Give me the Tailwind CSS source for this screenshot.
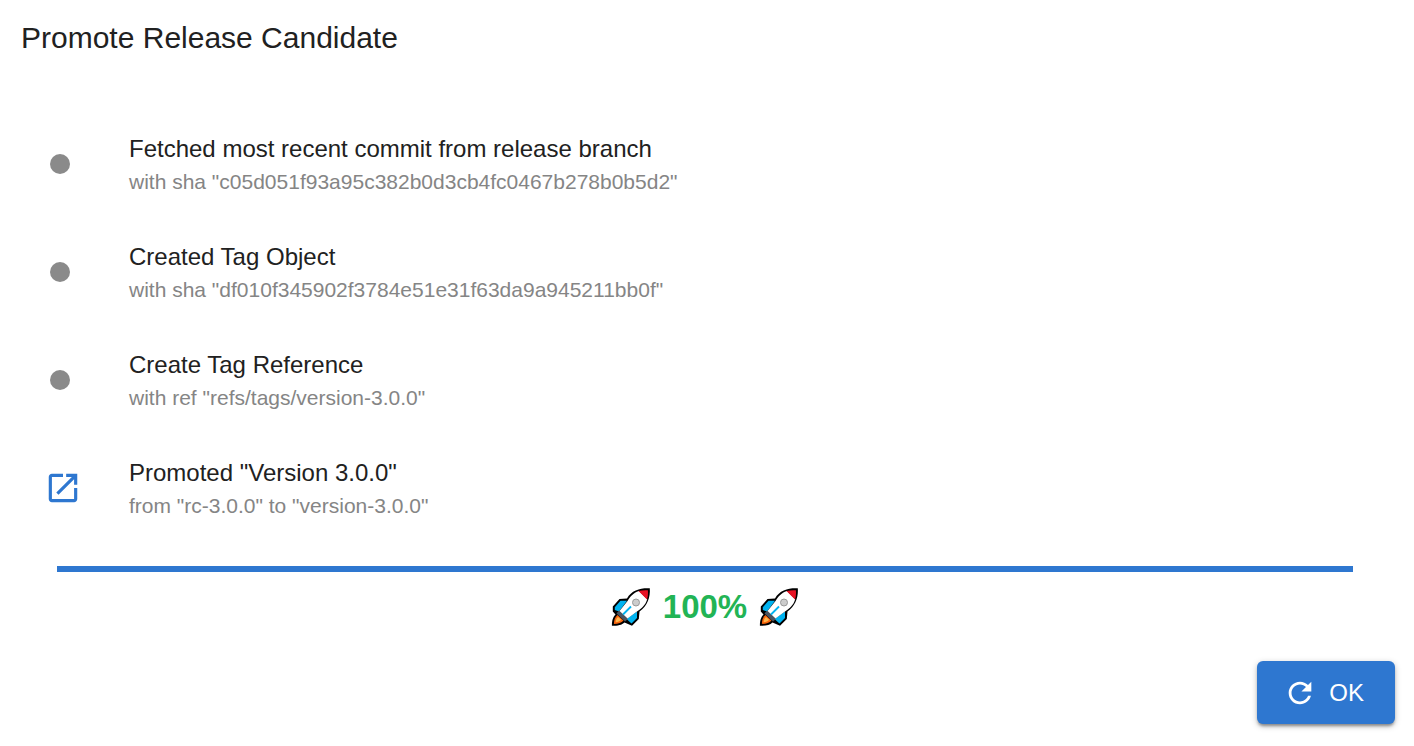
<!DOCTYPE html>
<html lang="en">
<head>
<meta charset="utf-8">
<meta name="viewport" content="width=device-width, initial-scale=1">
<title>Promote Release Candidate</title>
<script src="https://cdn.jsdelivr.net/npm/@tailwindcss/browser@4"></script>
</head>
<body class="bg-white font-['Liberation_Sans',Arial,sans-serif] text-[#212121]">
<svg class="hidden" aria-hidden="true">
  <symbol id="rocket" viewBox="0 0 40 40">
    <path d="M38.800 1.300C30 .8 20.500 3 16 11.500L8.500 12L1.800 19.500V24.500L4.500 27.500C2 30 1 33 .9 38.800C7 38.800 11 38 13.500 35.500L21 38.800L27.800 32L28.500 24.500C36.500 19 39.500 10 38.800 1.300Z" fill="#000"/>
    <path d="M16 13.800H9.500L3.800 20.200V23L8 24.500Z M26 24.500V31L20.500 36.500L15.500 32Z" fill="#00b3f0"/>
    <path d="M6.500 28C4 30 2.900 33 2.900 36.900C7.500 36.800 10.500 36 12.500 33.500Z" fill="#f7630c"/>
    <path d="M7 30C5.300 31.500 4.600 33.500 4.700 35.200C7 35 9 34.300 10.200 32.700Z" fill="#ffb84d"/>
    <path d="M5.500 26.500L8 23.500L17 32L14 34.500Z" fill="#4a5460"/>
    <path d="M8.500 24L16.500 14C19 9.500 22 6 28 3.900L36.200 12.200C34.500 18 31 21 26 24.500L16.500 31.500Z" fill="#fff"/>
    <path d="M27.500 4C30.500 3.200 33.500 3 36.900 3.200C37.100 7 37 9.500 36 12.500Z" fill="#e81224"/>
    <circle cx="25" cy="15.500" r="3.500" fill="#ccc" stroke="#999" stroke-width="1"/>
    <path d="M12 27.500L20 19.500" fill="none" stroke="#00b3f0" stroke-width="1.800"/>
  </symbol>
</svg>
<main class="pb-5">
  <h1 class="px-[21px] pt-4 text-3xl leading-11">Promote Release Candidate</h1>
  <ul class="mt-[50px] pl-12">
    <li class="flex h-27 items-center">
      <span class="w-[81px] shrink-0"><span class="ml-0.5 block size-5 rounded-full bg-[#8a8a8a]"></span></span>
      <div><p class="text-2xl leading-9">Fetched most recent commit from release branch</p><p class="text-[21px] leading-[30px] text-[#858585]">with sha "c05d051f93a95c382b0d3cb4fc0467b278b0b5d2"</p></div>
    </li>
    <li class="flex h-27 items-center">
      <span class="w-[81px] shrink-0"><span class="ml-0.5 block size-5 rounded-full bg-[#8a8a8a]"></span></span>
      <div><p class="text-2xl leading-9">Created Tag Object</p><p class="text-[21px] leading-[30px] text-[#858585]">with sha "df010f345902f3784e51e31f63da9a945211bb0f"</p></div>
    </li>
    <li class="flex h-27 items-center">
      <span class="w-[81px] shrink-0"><span class="ml-0.5 block size-5 rounded-full bg-[#8a8a8a]"></span></span>
      <div><p class="text-2xl leading-9">Create Tag Reference</p><p class="text-[21px] leading-[30px] text-[#858585]">with ref "refs/tags/version-3.0.0"</p></div>
    </li>
    <li class="flex h-27 items-center">
      <span class="w-[81px] shrink-0">
        <a href="#" aria-label="Open release" class="-ml-1 block size-[38px] text-[#2e77d0]">
          <svg viewBox="0 0 24 24" class="size-full fill-current"><path d="M19 19H5V5h7V3H5c-1.110 0-2 .9-2 2v14c0 1.100.89 2 2 2h14c1.100 0 2-.9 2-2v-7h-2v7zM14 3v2h3.590l-9.830 9.830 1.410 1.410L19 6.410V10h2V3h-7z"/></svg>
        </a>
      </span>
      <div><p class="text-2xl leading-9">Promoted "Version 3.0.0"</p><p class="text-[21px] leading-[30px] text-[#858585]">from "rc-3.0.0" to "version-3.0.0"</p></div>
    </li>
  </ul>
  <div role="progressbar" aria-label="Promotion progress" aria-valuenow="100" aria-valuemin="0" aria-valuemax="100" class="mt-6 mr-[61px] ml-[57px] h-1.5 bg-[#2e77d0]"></div>
  <div class="mt-[15px] mr-1 flex h-10 items-center justify-center gap-3">
    <svg class="size-10" role="img" aria-label="Rocket"><use href="#rocket"/></svg>
    <strong class="text-[33px] leading-10 text-[#22b455]">100%</strong>
    <svg class="size-10" role="img" aria-label="Rocket"><use href="#rocket"/></svg>
  </div>
  <div class="mt-[34px] flex justify-end pr-[19px]">
    <button type="button" class="flex h-[63px] items-center gap-3 rounded-md bg-[#2e77d0] pr-[31px] pl-[26px] text-2xl leading-8 text-white shadow-[0_3px_3px_-1px_rgba(0,0,0,0.35),0_2px_6px_rgba(0,0,0,0.25)]">
      <svg viewBox="0 0 24 24" class="size-[34px] fill-current" aria-hidden="true"><path d="M17.650 6.350C16.200 4.900 14.210 4 12 4c-4.420 0-7.990 3.580-7.990 8s3.570 8 7.990 8c3.730 0 6.840-2.550 7.730-6h-2.080c-.82 2.330-3.040 4-5.650 4-3.310 0-6-2.690-6-6s2.690-6 6-6c1.660 0 3.140.69 4.220 1.780L13 11h7V4l-2.350 2.350z"/></svg>
      OK
    </button>
  </div>
</main>
</body>
</html>
